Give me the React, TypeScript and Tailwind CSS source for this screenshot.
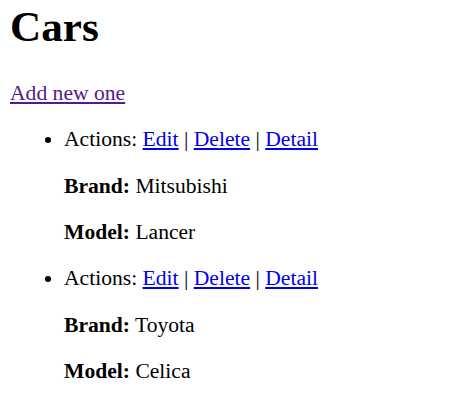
import React from "react";

interface Car {
  id: number;
  brand: string;
  model: string;
}

const cars: Car[] = [
  { id: 1, brand: "Mitsubishi", model: "Lancer" },
  { id: 2, brand: "Toyota", model: "Celica" },
];

const CarItem = ({ car }: { car: Car }) => {
  return (
    <li className="list-disc">
      Actions:{" "}
      <a href="#" className="text-[#0000ee] underline">
        Edit
      </a>{" "}
      |{" "}
      <a href="#" className="text-[#0000ee] underline">
        Delete
      </a>{" "}
      |{" "}
      <a href="#" className="text-[#0000ee] underline">
        Detail
      </a>
      <p className="my-[21.6px]">
        <b>Brand:</b> {car.brand}
      </p>
      <p className="my-[21.6px]">
        <b>Model:</b> {car.model}
      </p>
    </li>
  );
};

export default function App() {
  return (
    <div className="min-h-[417px] bg-white px-[10px] pt-[2px] text-[21.6px] leading-[1.15] text-black [font-family:'Liberation_Serif',serif]">
      <h1 className="mb-[29px] text-[43.2px] font-bold leading-[1.15]">Cars</h1>
      <a href="#" className="text-[#551a8b] underline">
        Add new one
      </a>
      <ul className="my-[21.6px] pl-[54px]">
        {cars.map((car) => (
          <CarItem key={car.id} car={car} />
        ))}
      </ul>
    </div>
  );
}
